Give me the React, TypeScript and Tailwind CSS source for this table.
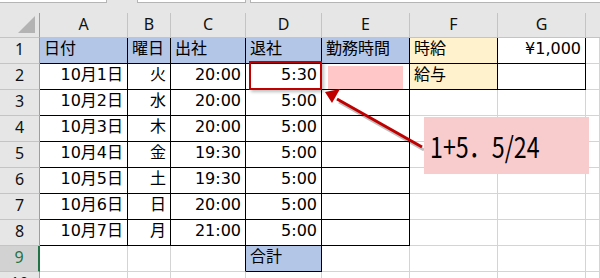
import React from 'react';

type Align = 'left' | 'right';

interface Cell {
  text?: string;
  align?: Align;
  fill?: string;
}

const COLS = ['A', 'B', 'C', 'D', 'E', 'F', 'G', ''];

const BLUE = 'bg-[#b4c6e7]';
const CREAM = 'bg-[#fff2cc]';

const dates = ['10月1日', '10月2日', '10月3日', '10月4日', '10月5日', '10月6日', '10月7日'];
const days = ['火', '水', '木', '金', '土', '日', '月'];
const inTimes = ['20:00', '20:00', '20:00', '19:30', '19:30', '20:00', '21:00'];
const outTimes = ['5:30', '5:00', '5:00', '5:00', '5:00', '5:00', '5:00'];

// rows 1..10, columns A..H
function buildSheet(): Cell[][] {
  const sheet: Cell[][] = Array.from({ length: 10 }, () => Array.from({ length: 8 }, () => ({})));
  const head = ['日付', '曜日', '出社', '退社', '勤務時間'];
  head.forEach((t, c) => (sheet[0][c] = { text: t, align: 'left', fill: BLUE }));
  sheet[0][5] = { text: '時給', align: 'left', fill: CREAM };
  sheet[0][6] = { text: '¥1,000', align: 'right' };
  sheet[1][5] = { text: '給与', align: 'left', fill: CREAM };
  for (let i = 0; i < 7; i++) {
    sheet[i + 1][0] = { text: dates[i], align: 'right' };
    sheet[i + 1][1] = { text: days[i], align: 'right' };
    sheet[i + 1][2] = { text: inTimes[i], align: 'right' };
    sheet[i + 1][3] = { text: outTimes[i], align: 'right' };
  }
  sheet[8][3] = { text: '合計', align: 'left', fill: BLUE };
  return sheet;
}

// cells that carry a thin black box border
function boxed(r: number, c: number) {
  if (r >= 0 && r <= 7 && c >= 0 && c <= 4) return true;
  if (r === 8 && c === 3) return true;
  if (r >= 0 && r <= 1 && (c === 5 || c === 6)) return true;
  return false;
}

const sheet = buildSheet();

function ColumnHeaders() {
  return (
    <>
      <div className="h-[25px] box-border border-r border-r-[#9e9e9e] border-b border-b-[#c4c4c4] bg-[#e6e6e6] relative">
        <svg className="absolute left-[18px] top-[3px]" width="18" height="18" viewBox="0 0 18 18">
          <polygon points="17,0 17,17 0,17" fill="#b3b3b3" />
        </svg>
      </div>
      {COLS.map((c, i) => (
        <div
          key={i}
          className={`h-[25px] box-border border-b border-b-[#c4c4c4] bg-[#e6e6e6] flex items-center justify-center pb-[3px] text-[16px] text-[#111] ${
            c ? 'border-r border-r-[#c4c4c4]' : ''
          }`}
          style={{ fontFamily: '"Noto Sans", sans-serif' }}
        >
          {c}
        </div>
      ))}
    </>
  );
}

function Row({ r }: { r: number }) {
  const selected = r === 8;
  return (
    <>
      <div
        className={`h-[26px] box-border border-b border-b-[#c4c4c4] flex items-center justify-center pb-[3px] text-[16px] ${
          selected
            ? 'bg-[#d2d2d2] text-[#217346] border-r-2 border-r-[#217346]'
            : 'bg-[#e6e6e6] text-[#111] border-r border-r-[#9e9e9e]'
        }`}
        style={{ fontFamily: '"Noto Sans", sans-serif' }}
      >
        {r + 1}
      </div>
      {sheet[r].map((cell, c) => {
        const right = boxed(r, c) || boxed(r, c + 1);
        const bottom = boxed(r, c) || boxed(r + 1, c);
        return (
          <div
            key={c}
            className={`h-[26px] box-border border-r border-b flex items-center pb-[3px] px-[4px] text-[16px] text-black whitespace-nowrap ${
              right ? 'border-r-black' : 'border-r-[#d4d4d4]'
            } ${bottom ? 'border-b-black' : 'border-b-[#d4d4d4]'} ${cell.fill ?? 'bg-white'} ${
              cell.align === 'right' ? 'justify-end' : 'justify-start'
            }`}
          >
            {cell.text}
          </div>
        );
      })}
    </>
  );
}

function Annotations() {
  return (
    <>
      {/* highlight on the edited cell */}
      <div className="absolute left-[249px] top-[61px] w-[73px] h-[29px] box-border border-2 border-[#c00000] shadow-[2px_2px_3px_rgba(0,0,0,0.25)]" />
      <div className="absolute left-[328px] top-[66px] w-[75px] h-[23px] bg-[#ffc7c7]" />
      <svg className="absolute inset-0 pointer-events-none" width="600" height="278" viewBox="0 0 600 278">
        <g transform="translate(2 3)" opacity="0.25">
          <line x1="422" y1="147" x2="337" y2="99" stroke="#000" strokeWidth="3" />
        </g>
        <line x1="422" y1="147" x2="337" y2="99" stroke="#c00000" strokeWidth="3" />
        <polygon points="325,92 340,89 332,103" fill="#c00000" />
      </svg>
      <div className="absolute left-[424px] top-[117px] w-[165px] h-[57px] bg-[#f8cbcc] flex items-center pl-[6px] overflow-hidden">
        <span
          className="inline-block origin-left scale-x-[0.8] text-[29px] text-black whitespace-nowrap leading-none"
          style={{ fontFamily: '"Noto Sans CJK JP", sans-serif' }}
        >
          1+5．5/24
        </span>
      </div>
    </>
  );
}

export default function App() {
  return (
    <div
      className="relative w-[600px] h-[278px] overflow-hidden bg-[#e6e6e6]"
      style={{ fontFamily: '"DejaVu Sans", "Noto Sans CJK JP", sans-serif' }}
    >
      {/* formula bar edge */}
      <div className="h-[13px] flex items-start">
        <div className="w-[107px] h-[3px] bg-white border-r border-b border-[#b5b5b5]" />
        <div className="ml-[30px] w-[109px] h-[3px] bg-white border-x border-b border-[#b5b5b5]" />
        <div className="ml-[4px] flex-1 h-[3px] bg-white border-l border-b border-[#b5b5b5]" />
      </div>
      <div className="grid grid-cols-[40px_88px_43px_75px_76px_88px_88px_88px_1fr]">
        <ColumnHeaders />
        {sheet.map((_, r) => (
          <Row key={r} r={r} />
        ))}
      </div>
      <Annotations />
    </div>
  );
}
